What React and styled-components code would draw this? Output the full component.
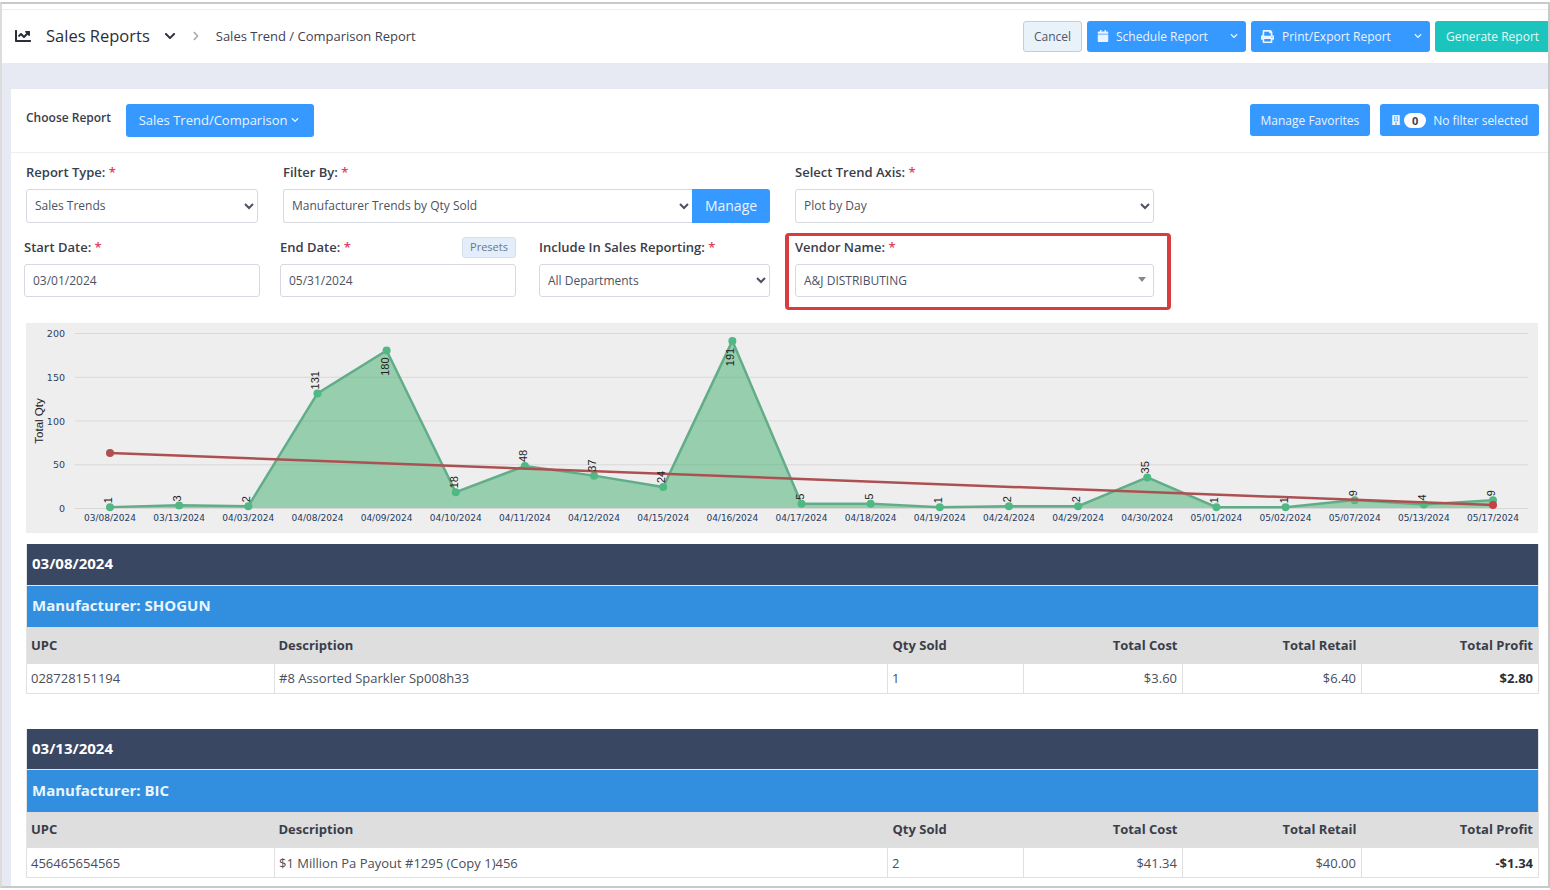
import React from "react";
import styled, { createGlobalStyle } from "styled-components";
import { FaBuilding, FaCalendar, FaChartLine, FaChevronDown, FaChevronRight, FaPrint } from "react-icons/fa";

const dates = [
  "03/08/2024", "03/13/2024", "04/03/2024", "04/08/2024", "04/09/2024", "04/10/2024", "04/11/2024",
  "04/12/2024", "04/15/2024", "04/16/2024", "04/17/2024", "04/18/2024", "04/19/2024", "04/24/2024",
  "04/29/2024", "04/30/2024", "05/01/2024", "05/02/2024", "05/07/2024", "05/13/2024", "05/17/2024",
];
const values = [1, 3, 2, 131, 180, 18, 48, 37, 24, 191, 5, 5, 1, 2, 2, 35, 1, 1, 9, 4, 9];
const ticks = [0, 50, 100, 150, 200];

const xAt = (i) => 110 + i * 69.15;
const yAt = (v) => 508 - v * 0.875;

const reports = [
  { date: "03/08/2024", maker: "SHOGUN", upc: "028728151194", desc: "#8 Assorted Sparkler Sp008h33", qty: 1, cost: "$3.60", retail: "$6.40", profit: "$2.80" },
  { date: "03/13/2024", maker: "BIC", upc: "456465654565", desc: "$1 Million Pa Payout #1295 (Copy 1)456", qty: 2, cost: "$41.34", retail: "$40.00", profit: "-$1.34" },
];

const TrendChart = () => {
  const line = values.map((v, i) => `${xAt(i)},${yAt(v)}`).join(" ");
  const area = `110,508 ${line} ${xAt(20)},508`;
  return (
    <ChartBox>
      <svg width="1512" height="210" viewBox="26 323 1512 210">
        {ticks.map((t) => (
          <g key={t}>
            <line x1="75" x2="1528" y1={yAt(t) + 0.5} y2={yAt(t) + 0.5} stroke="#d8d8d8" />
            <text x="65" y={yAt(t) + 4} textAnchor="end" fontSize="9.5" fill="#2f3f5c">{t}</text>
          </g>
        ))}
        <DataText transform="translate(43 421) rotate(-90)" textAnchor="middle" fontSize="11.5">Total Qty</DataText>
        <polygon points={area} fill="#3fae6e" fillOpacity="0.5" />
        <polyline points={line} fill="none" stroke="#62ad89" strokeWidth="2.5" />
        {values.map((v, i) => (
          <circle key={i} cx={xAt(i)} cy={yAt(v)} r="4" fill="#4fb883" />
        ))}
        <line x1="110" y1="453" x2="1493" y2="505" stroke="#ad5052" strokeWidth="2.5" />
        <circle cx="110" cy="453" r="4" fill="#b04f50" />
        <circle cx="1493" cy="505" r="4" fill="#c8403f" />
        {values.map((v, i) => {
          const below = v === 180 || v === 191;
          const y = below ? yAt(v) + 7 : yAt(v) - 4;
          return (
            <DataText
              key={i}
              transform={`translate(${xAt(i) + 2} ${y}) rotate(-90)`}
              textAnchor={below ? "end" : "start"}
              fontSize="11"
            >
              {v}
            </DataText>
          );
        })}
        {dates.map((d, i) => (
          <text key={d} x={xAt(i)} y="521" textAnchor="middle" fontSize="9" fill="#1f3a5f">{d}</text>
        ))}
      </svg>
    </ChartBox>
  );
};

const ReportTable = ({ report }) => (
  <Table>
    <colgroup>
      <col width="248" />
      <col width="613" />
      <col width="136" />
      <col width="159" />
      <col width="179" />
      <col width="177" />
    </colgroup>
    <thead>
      <tr>
        <DateCell colSpan="6">{report.date}</DateCell>
      </tr>
      <tr>
        <MakerCell colSpan="6">Manufacturer: {report.maker}</MakerCell>
      </tr>
      <tr>
        <HeadCell>UPC</HeadCell>
        <HeadCell>Description</HeadCell>
        <HeadCell $left={5}>Qty Sold</HeadCell>
        <HeadCell $right>Total Cost</HeadCell>
        <HeadCell $right>Total Retail</HeadCell>
        <HeadCell $right>Total Profit</HeadCell>
      </tr>
    </thead>
    <tbody>
      <tr>
        <Cell>{report.upc}</Cell>
        <Cell>{report.desc}</Cell>
        <Cell>{report.qty}</Cell>
        <Cell $right>{report.cost}</Cell>
        <Cell $right>{report.retail}</Cell>
        <Cell $right $bold>{report.profit}</Cell>
      </tr>
    </tbody>
  </Table>
);

export default function App() {
  return (
    <>
      <GlobalStyle />
      <Frame>
        <TopStrip />
        <Header>
          <Crumbs>
            <FaChartLine size={16} color="#2b2f3a" />
            <Title>Sales Reports</Title>
            <FaChevronDown size={12} color="#2b2f3a" />
            <CrumbSep><FaChevronRight size={10} /></CrumbSep>
            <SubTitle>Sales Trend / Comparison Report</SubTitle>
          </Crumbs>
          <Actions>
            <CancelButton>Cancel</CancelButton>
            <SplitButton $width={159} $iconGap={7}>
              <FaCalendar size={12} />
              <span>Schedule Report</span>
              <Caret><FaChevronDown size={8} /></Caret>
            </SplitButton>
            <SplitButton $width={179}>
              <FaPrint size={13} />
              <span>Print/Export Report</span>
              <Caret><FaChevronDown size={8} /></Caret>
            </SplitButton>
            <GenerateButton>Generate Report</GenerateButton>
          </Actions>
        </Header>
        <Card>
          <CardTop>
            <ChooseLabel>Choose Report</ChooseLabel>
            <ChooseButton>
              Sales Trend/Comparison <FaChevronDown size={8} />
            </ChooseButton>
            <TopRight>
              <SmallButton>Manage Favorites</SmallButton>
              <SmallButton>
                <FaBuilding size={10} />
                <Badge>0</Badge>
                <FilterText>No filter selected</FilterText>
              </SmallButton>
            </TopRight>
          </CardTop>
          <FormRow $left={15}>
            <Field $width={232}>
              <Label>Report Type: <Star>*</Star></Label>
              <Select defaultValue="Sales Trends">
                <option>Sales Trends</option>
              </Select>
            </Field>
            <Field $width={487}>
              <Label>Filter By: <Star>*</Star></Label>
              <InputGroup>
                <Select $joined defaultValue="Manufacturer Trends by Qty Sold">
                  <option>Manufacturer Trends by Qty Sold</option>
                </Select>
                <ManageButton>Manage</ManageButton>
              </InputGroup>
            </Field>
            <Field $width={359}>
              <Label>Select Trend Axis: <Star>*</Star></Label>
              <Select defaultValue="Plot by Day">
                <option>Plot by Day</option>
              </Select>
            </Field>
          </FormRow>
          <FormRow $left={13} $top={14}>
            <Field $width={236}>
              <Label>Start Date: <Star>*</Star></Label>
              <DateInput defaultValue="03/01/2024" />
            </Field>
            <Field $width={236} $gap={20}>
              <LabelRow>
                <Label>End Date: <Star>*</Star></Label>
                <PresetsButton>Presets</PresetsButton>
              </LabelRow>
              <DateInput defaultValue="05/31/2024" />
            </Field>
            <Field $width={231} $gap={23}>
              <Label>Include In Sales Reporting: <Star>*</Star></Label>
              <Select $short defaultValue="All Departments">
                <option>All Departments</option>
              </Select>
            </Field>
            <VendorField $width={359}>
              <Label>Vendor Name: <Star>*</Star></Label>
              <VendorPicker>A&amp;J DISTRIBUTING</VendorPicker>
            </VendorField>
          </FormRow>
          <TrendChart />
          <Tables>
            {reports.map((r) => (
              <ReportTable key={r.date} report={r} />
            ))}
          </Tables>
        </Card>
      </Frame>
    </>
  );
}

const GlobalStyle = createGlobalStyle`
  html, body {
    margin: 0;
    height: 890px;
    overflow: hidden;
    background: #fff;
  }
  * {
    box-sizing: border-box;
  }
  body {
    font-family: "Open Sans", "Liberation Sans", sans-serif;
    font-size: 13px;
    color: #3f4254;
  }
  svg text {
    font-family: "DejaVu Sans", sans-serif;
  }
`;

const Frame = styled.div`
  margin: 2px 0 0 0;
  width: 1550px;
  height: 886px;
  border: 2px solid #c9c9c9;
  border-left-color: #dcdcdc;
  background: #e8eaf3;
  overflow: hidden;
`;

const TopStrip = styled.div`
  height: 6px;
  background: #fff;
  border-bottom: 1px solid #eeeeee;
`;

const Header = styled.div`
  height: 53px;
  background: #fff;
  display: flex;
  align-items: center;
  justify-content: space-between;
  padding-left: 13px;
`;

const Crumbs = styled.div`
  display: flex;
  align-items: center;
  padding-bottom: 2px;
`;

const Title = styled.span`
  font-size: 16.5px;
  color: #2b2f3a;
  margin: 0 14px 0 15px;
`;

const CrumbSep = styled.span`
  color: #a9adb5;
  display: flex;
  margin: 0 15px 0 15px;
`;

const SubTitle = styled.span`
  font-size: 13px;
  color: #3f4254;
`;

const Actions = styled.div`
  display: flex;
  gap: 5px;
  flex-shrink: 0;
`;

const CancelButton = styled.button`
  width: 59px;
  height: 31px;
  padding: 0 0 1px;
  font: 12px "Open Sans", sans-serif;
  color: #4e5867;
  background: #e9f1f9;
  border: 1px solid #c6cdd5;
  border-radius: 3px;
`;

const SplitButton = styled.button`
  width: ${(p) => p.$width}px;
  height: 31px;
  padding: 0 8px 1px 10px;
  display: flex;
  align-items: center;
  gap: ${(p) => p.$iconGap ?? 8}px;
  font: 12px "Open Sans", sans-serif;
  color: #eaf4ff;
  background: #3699ff;
  border: 0;
  border-radius: 3px;
`;

const Caret = styled.span`
  margin-left: auto;
  display: flex;
`;

const GenerateButton = styled.button`
  width: 113px;
  height: 31px;
  padding: 0 0 1px 2px;
  font: 12px "Open Sans", sans-serif;
  color: #e4fbf8;
  background: #1bc5bd;
  border: 0;
  border-radius: 3px 0 0 3px;
`;

const Card = styled.div`
  margin: 26px 0 0 9px;
  height: 800px;
  background: #fff;
`;

const CardTop = styled.div`
  height: 64px;
  padding: 15px 9px 0 15px;
  display: flex;
  align-items: flex-start;
  border-bottom: 1px solid #eeeeee;
`;

const ChooseLabel = styled.span`
  font-size: 12px;
  font-weight: 600;
  margin: 5px 15px 0 0;
  color: #3a3d4a;
`;

const ChooseButton = styled.button`
  width: 188px;
  height: 33px;
  padding: 0 2px 2px 0;
  display: flex;
  align-items: center;
  justify-content: center;
  gap: 4px;
  font: 13px "Open Sans", sans-serif;
  color: #eaf4ff;
  background: #3699ff;
  border: 0;
  border-radius: 3px;
`;

const TopRight = styled.div`
  margin-left: auto;
  display: flex;
  gap: 10px;
`;

const SmallButton = styled.button`
  height: 32px;
  padding: 0 11px;
  display: flex;
  align-items: center;
  font: 12px "Open Sans", sans-serif;
  color: #eaf4ff;
  background: #3699ff;
  border: 0;
  border-radius: 3px;
`;

const Badge = styled.span`
  width: 22px;
  height: 15px;
  margin-left: 3px;
  border-radius: 8px;
  background: #fff;
  color: #3f4254;
  font-size: 11px;
  font-weight: 700;
  line-height: 15px;
`;

const FilterText = styled.span`
  margin-left: 7px;
`;

const FormRow = styled.div`
  display: flex;
  padding: ${(p) => p.$top ?? 9}px 0 0 ${(p) => p.$left}px;
`;

const Field = styled.div`
  width: ${(p) => p.$width}px;
  margin-left: ${(p) => p.$gap ?? 25}px;
  &:first-child {
    margin-left: 0;
  }
`;

const VendorField = styled(Field)`
  position: relative;
  &::after {
    content: "";
    position: absolute;
    top: -4px;
    left: -10px;
    right: -17px;
    bottom: -13px;
    border-style: solid;
    border-color: #d93c3f;
    border-width: 3px 4px;
    border-radius: 4px;
    pointer-events: none;
  }
`;

const Label = styled.label`
  display: block;
  height: 27px;
  line-height: 20px;
  font-size: 13px;
  font-weight: 600;
  color: #3a3d4a;
`;

const LabelRow = styled.div`
  display: flex;
  justify-content: space-between;
  height: 27px;
`;

const Star = styled.span`
  color: #e0405a;
`;

const Select = styled.select`
  display: block;
  width: ${(p) => (p.$joined ? "auto" : "100%")};
  flex: ${(p) => (p.$joined ? 1 : "none")};
  height: ${(p) => (p.$short ? 33 : 34)}px;
  padding: 0 4px ${(p) => (p.$short ? 0 : 2)}px;
  font: 12px "Open Sans", sans-serif;
  color: #4d5260;
  background: #fff;
  border: 1px solid #d6d9e0;
  border-radius: ${(p) => (p.$joined ? "3px 0 0 3px" : "3px")};
  ${(p) => (p.$joined ? "border-right: 0;" : "")}
`;

const InputGroup = styled.div`
  display: flex;
`;

const ManageButton = styled.button`
  width: 78px;
  height: 34px;
  padding: 0 0 2px;
  font: 14px "Open Sans", sans-serif;
  color: #eaf4ff;
  background: #3699ff;
  border: 0;
  border-radius: 0 3px 3px 0;
`;

const DateInput = styled.input`
  display: block;
  width: 100%;
  height: 33px;
  padding: 0 8px;
  font: 12px "Open Sans", sans-serif;
  color: #4d5260;
  border: 1px solid #d6d9e0;
  border-radius: 3px;
`;

const PresetsButton = styled.button`
  width: 54px;
  height: 21px;
  padding: 0 0 2px;
  font: 11px "Open Sans", sans-serif;
  color: #6b7787;
  background: #e3eefa;
  border: 1px solid #d5dfea;
  border-radius: 3px;
`;

const VendorPicker = styled.div`
  position: relative;
  height: 33px;
  padding-left: 8px;
  line-height: 31px;
  font-size: 12px;
  color: #4d5260;
  border: 1px solid #d6d9e0;
  border-radius: 3px;
  &::after {
    content: "";
    position: absolute;
    top: 12px;
    right: 7px;
    border-style: solid;
    border-width: 5px 4px 0;
    border-color: #888 transparent transparent;
  }
`;

const ChartBox = styled.div`
  margin: 26px 0 0 15px;
  width: 1512px;
  height: 210px;
  background: #eeeeee;
  svg {
    display: block;
  }
`;

const DataText = styled.text`
  && {
    font-family: "Liberation Sans", sans-serif;
  }
  fill: #222;
`;

const Tables = styled.div`
  margin: 11px 0 0 15px;
  width: 1512px;
  display: flex;
  flex-direction: column;
  gap: 35px;
`;

const Table = styled.table`
  width: 1512px;
  table-layout: fixed;
  border-collapse: collapse;
  border-left: 1px solid #e4e4e4;
  border-right: 1px solid #e4e4e4;
`;

const DateCell = styled.th`
  height: 41px;
  padding: 0 0 2px 5px;
  text-align: left;
  font-size: 15px;
  font-weight: 700;
  color: #fff;
  background: #3a4763;
  border-bottom: 1px solid #dbe7f2;
`;

const MakerCell = styled.th`
  height: 42px;
  padding: 0 0 2px 5px;
  text-align: left;
  font-size: 15px;
  font-weight: 700;
  color: #e9f5ff;
  background: #328fdf;
`;

const HeadCell = styled.th`
  height: 36px;
  padding: 0 5px 0 ${(p) => p.$left ?? 4}px;
  text-align: ${(p) => (p.$right ? "right" : "left")};
  font-size: 13px;
  font-weight: 700;
  color: #3a3d4a;
  background: #dedede;
`;

const Cell = styled.td`
  height: 30px;
  padding: 0 5px 0 4px;
  text-align: ${(p) => (p.$right ? "right" : "left")};
  font-size: 13px;
  font-weight: ${(p) => (p.$bold ? 700 : 400)};
  color: ${(p) => (p.$bold ? "#2b2f3a" : "#4a4e5a")};
  border: 1px solid #e0e0e0;
`;
